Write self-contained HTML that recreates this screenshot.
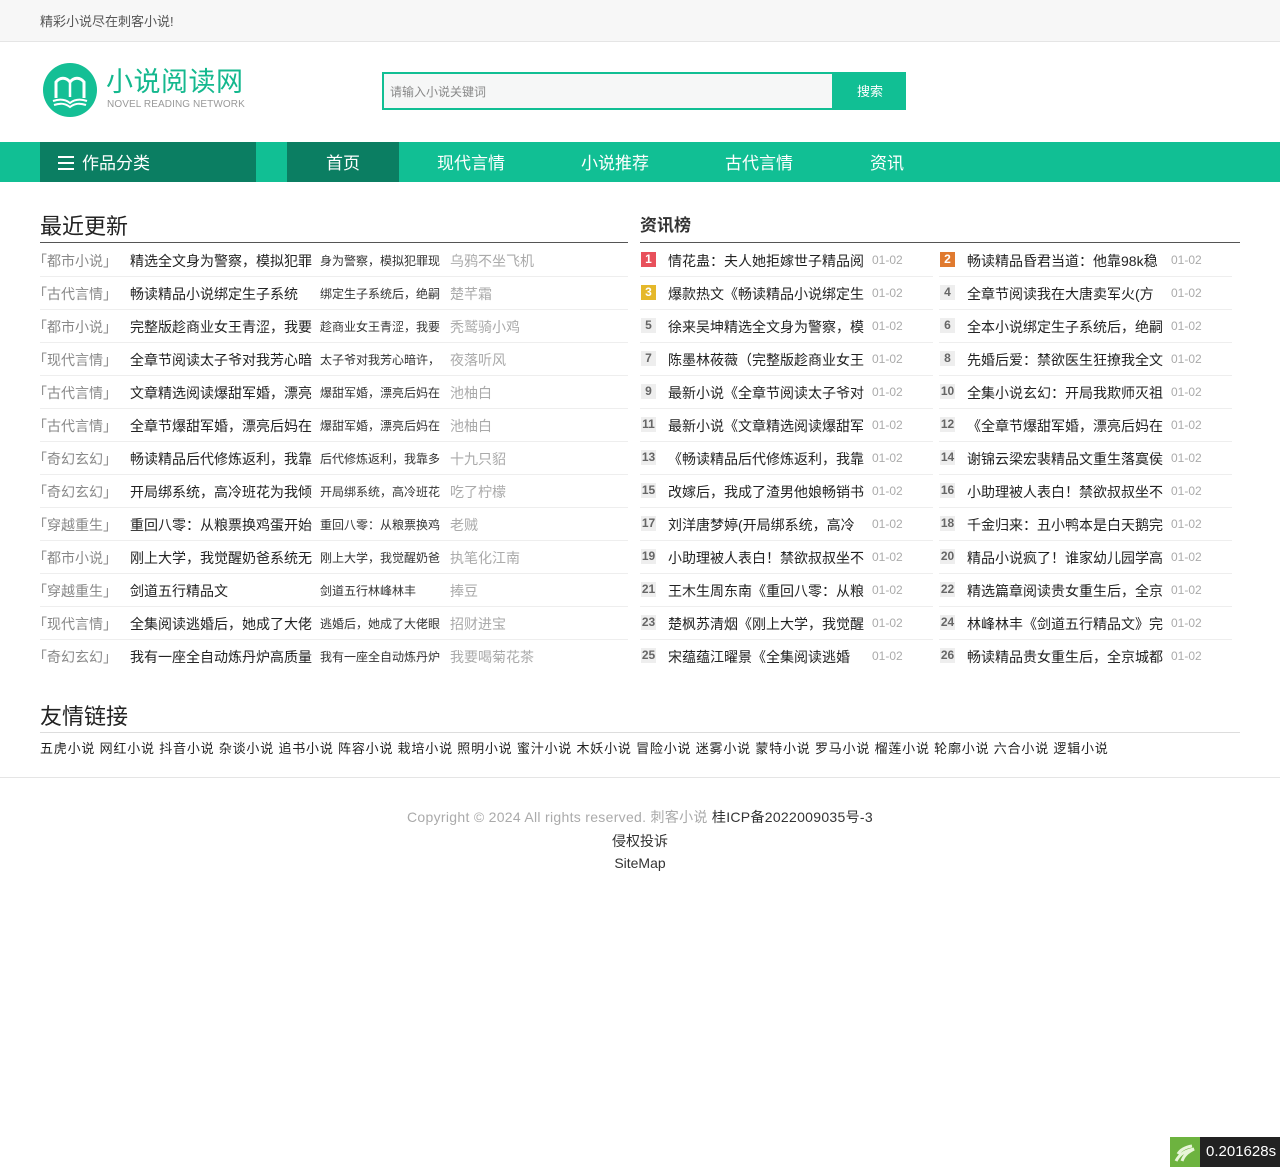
<!DOCTYPE html>
<html><head><meta charset="utf-8">
<style>
*{margin:0;padding:0;box-sizing:border-box}
body{width:1280px;height:1167px;background:#fff;font-family:"Liberation Sans","Noto Sans CJK SC",sans-serif;color:#333;font-size:14px;position:relative;overflow:hidden}
.top{height:42px;background:#f7f7f7;border-bottom:1px solid #e5e5e5}
.top span{position:absolute;left:40px;top:11px;font-size:13px;color:#555}
.logo{position:absolute;left:42px;top:62px}
.title{position:absolute;left:106px;top:65px;font-size:27px;color:#14b88e;letter-spacing:0.5px;line-height:34px}
.sub{position:absolute;left:107px;top:99px;font-size:10px;color:#999;letter-spacing:0.1px}
.search{position:absolute;left:382px;top:72px;width:452px;height:38px;border:2px solid #11bf94;background:#f6f7f7;font-size:12px;color:#888;line-height:36px;padding-left:6px}
.btn{position:absolute;left:834px;top:72px;width:72px;height:38px;background:#11bf94;color:#fff;font-size:13px;text-align:center;line-height:40px}
.nav{position:absolute;left:0;top:142px;width:1280px;height:40px;background:#11bf94}
.cat{position:absolute;left:40px;top:0;width:216px;height:40px;background:#0b7e62;color:#fff;font-size:17px;line-height:44px;padding-left:18px}
.cat i{display:inline-block;width:16px;height:14px;border-top:2px solid #fff;border-bottom:2px solid #fff;position:relative;vertical-align:-1px;margin-right:8px}
.cat i:after{content:"";position:absolute;left:0;right:0;top:4px;border-top:2px solid #fff}
.nv{position:absolute;top:0;height:40px;line-height:44px;color:#fff;font-size:17px;text-align:center}
.h2{position:absolute;font-size:22px;color:#222}
.line{position:absolute;height:1px;background:#555}
.row{position:absolute;left:40px;width:588px;height:33px;border-bottom:1px solid #eee;font-size:14px;line-height:34px;white-space:nowrap}
.row span{position:absolute;top:0;overflow:hidden}
.c1{left:0;color:#888}
.c2{left:90px;width:184px;color:#222}
.c3{left:280px;width:124px;font-size:12px;color:#333}
.c4{left:410px;color:#aaa}
.rk{position:absolute;width:293px;height:33px;border-bottom:1px solid #eee;line-height:34px;white-space:nowrap;font-size:14px}
.rk b{position:absolute;left:1px;top:8px;width:15px;height:15px;background:#eee;color:#666;font-size:12px;line-height:15px;text-align:center}
.rk .t{position:absolute;left:28px;top:0;width:196px;overflow:hidden;color:#222}
.rk .d{position:absolute;left:232px;top:-1px;color:#aaa;font-size:12px}
.links{position:absolute;left:40px;top:738px;font-size:13px;color:#222;letter-spacing:0.8px}
.foot{position:absolute;left:0;width:1280px;text-align:center;font-size:14px;color:#333}
</style></head><body>
<div class="top"><span>精彩小说尽在刺客小说!</span></div>
<svg class="logo" width="56" height="56" viewBox="0 0 56 56"><circle cx="28" cy="28" r="27" fill="#14bf95"/><path d="M14 36V20c4-5 10-5 14 0c4-5 10-5 14 0v16" fill="none" stroke="#fff" stroke-width="3"/><path d="M28 20v15" stroke="#fff" stroke-width="2.5"/><path d="M11 39c6-2 12-2 17 2c5-4 11-4 17-2M12 43c6-2 11-2 16 2c5-4 10-4 16-2" fill="none" stroke="#fff" stroke-width="2"/></svg>
<div class="title">小说阅读网</div>
<div class="sub">NOVEL READING NETWORK</div>
<div class="search">请输入小说关键词</div>
<div class="btn">搜索</div>
<div class="nav">
<div class="cat"><i></i>作品分类</div>
<div class="nv" style="left:287px;width:112px;background:#0b7e62">首页</div>
<div class="nv" style="left:421px;width:100px">现代言情</div>
<div class="nv" style="left:565px;width:100px">小说推荐</div>
<div class="nv" style="left:709px;width:100px">古代言情</div>
<div class="nv" style="left:857px;width:60px">资讯</div>
</div>
<div class="h2" style="left:40px;top:209px">最近更新</div>
<div class="line" style="left:40px;top:242px;width:588px"></div>
<div class="h2" style="left:640px;top:211px;font-size:17px;font-weight:bold;color:#333">资讯榜</div>
<div class="line" style="left:640px;top:242px;width:600px"></div>

<div class="row" style="top:244px"><span class="c1">｢都市小说｣</span><span class="c2">精选全文身为警察，模拟犯罪</span><span class="c3">身为警察，模拟犯罪现</span><span class="c4">乌鸦不坐飞机</span></div>
<div class="row" style="top:277px"><span class="c1">｢古代言情｣</span><span class="c2">畅读精品小说绑定生子系统</span><span class="c3">绑定生子系统后，绝嗣</span><span class="c4">楚芊霜</span></div>
<div class="row" style="top:310px"><span class="c1">｢都市小说｣</span><span class="c2">完整版趁商业女王青涩，我要</span><span class="c3">趁商业女王青涩，我要</span><span class="c4">秃鹫骑小鸡</span></div>
<div class="row" style="top:343px"><span class="c1">｢现代言情｣</span><span class="c2">全章节阅读太子爷对我芳心暗</span><span class="c3">太子爷对我芳心暗许，</span><span class="c4">夜落听风</span></div>
<div class="row" style="top:376px"><span class="c1">｢古代言情｣</span><span class="c2">文章精选阅读爆甜军婚，漂亮</span><span class="c3">爆甜军婚，漂亮后妈在</span><span class="c4">池柚白</span></div>
<div class="row" style="top:409px"><span class="c1">｢古代言情｣</span><span class="c2">全章节爆甜军婚，漂亮后妈在</span><span class="c3">爆甜军婚，漂亮后妈在</span><span class="c4">池柚白</span></div>
<div class="row" style="top:442px"><span class="c1">｢奇幻玄幻｣</span><span class="c2">畅读精品后代修炼返利，我靠</span><span class="c3">后代修炼返利，我靠多</span><span class="c4">十九只貂</span></div>
<div class="row" style="top:475px"><span class="c1">｢奇幻玄幻｣</span><span class="c2">开局绑系统，高冷班花为我倾</span><span class="c3">开局绑系统，高冷班花</span><span class="c4">吃了柠檬</span></div>
<div class="row" style="top:508px"><span class="c1">｢穿越重生｣</span><span class="c2">重回八零：从粮票换鸡蛋开始</span><span class="c3">重回八零：从粮票换鸡</span><span class="c4">老贼</span></div>
<div class="row" style="top:541px"><span class="c1">｢都市小说｣</span><span class="c2">刚上大学，我觉醒奶爸系统无</span><span class="c3">刚上大学，我觉醒奶爸</span><span class="c4">执笔化江南</span></div>
<div class="row" style="top:574px"><span class="c1">｢穿越重生｣</span><span class="c2">剑道五行精品文</span><span class="c3">剑道五行林峰林丰</span><span class="c4">捧豆</span></div>
<div class="row" style="top:607px"><span class="c1">｢现代言情｣</span><span class="c2">全集阅读逃婚后，她成了大佬</span><span class="c3">逃婚后，她成了大佬眼</span><span class="c4">招财进宝</span></div>
<div class="row" style="top:640px;border-bottom:none"><span class="c1">｢奇幻玄幻｣</span><span class="c2">我有一座全自动炼丹炉高质量</span><span class="c3">我有一座全自动炼丹炉</span><span class="c4">我要喝菊花茶</span></div>

<div class="rk" style="left:640px;top:244px"><b style="background:#e8505b;color:#fff">1</b><span class="t">情花蛊：夫人她拒嫁世子精品阅</span><span class="d">01-02</span></div>
<div class="rk" style="left:939px;top:244px"><b style="background:#e07a2f;color:#fff">2</b><span class="t">畅读精品昏君当道：他靠98k稳</span><span class="d">01-02</span></div>
<div class="rk" style="left:640px;top:277px"><b style="background:#e5b82a;color:#fff">3</b><span class="t">爆款热文《畅读精品小说绑定生</span><span class="d">01-02</span></div>
<div class="rk" style="left:939px;top:277px"><b>4</b><span class="t">全章节阅读我在大唐卖军火(方</span><span class="d">01-02</span></div>
<div class="rk" style="left:640px;top:310px"><b>5</b><span class="t">徐来吴坤精选全文身为警察，模</span><span class="d">01-02</span></div>
<div class="rk" style="left:939px;top:310px"><b>6</b><span class="t">全本小说绑定生子系统后，绝嗣</span><span class="d">01-02</span></div>
<div class="rk" style="left:640px;top:343px"><b>7</b><span class="t">陈墨林莜薇（完整版趁商业女王</span><span class="d">01-02</span></div>
<div class="rk" style="left:939px;top:343px"><b>8</b><span class="t">先婚后爱：禁欲医生狂撩我全文</span><span class="d">01-02</span></div>
<div class="rk" style="left:640px;top:376px"><b>9</b><span class="t">最新小说《全章节阅读太子爷对</span><span class="d">01-02</span></div>
<div class="rk" style="left:939px;top:376px"><b>10</b><span class="t">全集小说玄幻：开局我欺师灭祖</span><span class="d">01-02</span></div>
<div class="rk" style="left:640px;top:409px"><b>11</b><span class="t">最新小说《文章精选阅读爆甜军</span><span class="d">01-02</span></div>
<div class="rk" style="left:939px;top:409px"><b>12</b><span class="t">《全章节爆甜军婚，漂亮后妈在</span><span class="d">01-02</span></div>
<div class="rk" style="left:640px;top:442px"><b>13</b><span class="t">《畅读精品后代修炼返利，我靠</span><span class="d">01-02</span></div>
<div class="rk" style="left:939px;top:442px"><b>14</b><span class="t">谢锦云梁宏裴精品文重生落寞侯</span><span class="d">01-02</span></div>
<div class="rk" style="left:640px;top:475px"><b>15</b><span class="t">改嫁后，我成了渣男他娘畅销书</span><span class="d">01-02</span></div>
<div class="rk" style="left:939px;top:475px"><b>16</b><span class="t">小助理被人表白！禁欲叔叔坐不</span><span class="d">01-02</span></div>
<div class="rk" style="left:640px;top:508px"><b>17</b><span class="t">刘洋唐梦婷(开局绑系统，高冷</span><span class="d">01-02</span></div>
<div class="rk" style="left:939px;top:508px"><b>18</b><span class="t">千金归来：丑小鸭本是白天鹅完</span><span class="d">01-02</span></div>
<div class="rk" style="left:640px;top:541px"><b>19</b><span class="t">小助理被人表白！禁欲叔叔坐不</span><span class="d">01-02</span></div>
<div class="rk" style="left:939px;top:541px"><b>20</b><span class="t">精品小说疯了！谁家幼儿园学高</span><span class="d">01-02</span></div>
<div class="rk" style="left:640px;top:574px"><b>21</b><span class="t">王木生周东南《重回八零：从粮</span><span class="d">01-02</span></div>
<div class="rk" style="left:939px;top:574px"><b>22</b><span class="t">精选篇章阅读贵女重生后，全京</span><span class="d">01-02</span></div>
<div class="rk" style="left:640px;top:607px"><b>23</b><span class="t">楚枫苏清烟《刚上大学，我觉醒</span><span class="d">01-02</span></div>
<div class="rk" style="left:939px;top:607px"><b>24</b><span class="t">林峰林丰《剑道五行精品文》完</span><span class="d">01-02</span></div>
<div class="rk" style="left:640px;top:640px;border-bottom:none"><b>25</b><span class="t">宋蕴蕴江曜景《全集阅读逃婚</span><span class="d">01-02</span></div>
<div class="rk" style="left:939px;top:640px;border-bottom:none"><b>26</b><span class="t">畅读精品贵女重生后，全京城都</span><span class="d">01-02</span></div>

<div class="h2" style="left:40px;top:699px">友情链接</div>
<div class="line" style="left:40px;top:732px;width:1200px;background:#ddd"></div>
<div class="links">五虎小说 网红小说 抖音小说 杂谈小说 追书小说 阵容小说 栽培小说 照明小说 蜜汁小说 木妖小说 冒险小说 迷雾小说 蒙特小说 罗马小说 榴莲小说 轮廓小说 六合小说 逻辑小说</div>
<div style="position:absolute;left:0;top:777px;width:1280px;height:1px;background:#e5e5e5"></div>
<div class="foot" style="top:807px;letter-spacing:0.3px"><span style="color:#aaa">Copyright © 2024 All rights reserved. 刺客小说</span> 桂ICP备2022009035号-3</div>
<div class="foot" style="top:831px">侵权投诉</div>
<div class="foot" style="top:855px">SiteMap</div>
<div style="position:absolute;left:1170px;top:1137px;width:110px;height:30px;background:#222;color:#fff;font-size:15px;line-height:30px">
<svg width="30" height="30" style="position:absolute;left:0;top:0"><rect width="30" height="30" fill="#6db33f"/><path d="M6 24c4-8 10-10 18-12c-6 3-10 6-12 12M8 17c3-5 8-7 14-8" stroke="#e8f5d8" stroke-width="3" fill="none"/></svg>
<span style="position:absolute;left:36px">0.201628s</span></div>
</body></html>
